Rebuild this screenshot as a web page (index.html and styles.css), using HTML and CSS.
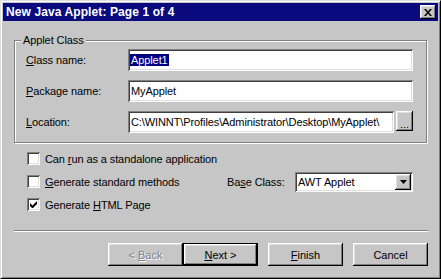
FILE: index.html
```html
<!DOCTYPE html>
<html lang="en">
<head>
  <meta charset="UTF-8">
  <title>New Java Applet</title>
  <link rel="stylesheet" href="styles.css">
</head>
<body>
  <div class="window">
    <div class="titlebar">
      <span class="title">New Java Applet: Page 1 of 4</span>
      <span class="close">
        <svg width="8" height="7" viewBox="0 0 8 7"><path d="M0 0h2l2 2.5L6 0h2L5 3.5 8 7H6L4 4.5 2 7H0l3-3.5z" fill="#000"/></svg>
      </span>
    </div>

    <div class="content">
      <fieldset class="group">
        <legend>Applet Class</legend>
        <div class="field">
          <label><u>C</u>lass name:</label>
          <div class="edit"><span class="sel">Applet1</span></div>
        </div>
        <div class="field">
          <label><u>P</u>ackage name:</label>
          <div class="edit">MyApplet</div>
        </div>
        <div class="field">
          <label><u>L</u>ocation:</label>
          <div class="edit">C:\WINNT\Profiles\Administrator\Desktop\MyApplet\</div>
          <button class="browse">...</button>
        </div>
      </fieldset>

      <div class="options">
        <div class="row">
          <span class="check"></span>
          <span>Can <u>r</u>un as a standalone application</span>
        </div>
        <div class="row">
          <span class="check"></span>
          <span><u>G</u>enerate standard methods</span>
          <div class="base">
            <span class="base-label">Ba<u>s</u>e Class:</span>
            <div class="combo">
              <span>AWT Applet</span>
              <span class="drop">
                <svg width="7" height="4" viewBox="0 0 7 4"><path d="M0 0h7L3.5 4z" fill="#000"/></svg>
              </span>
            </div>
          </div>
        </div>
        <div class="row">
          <span class="check">
            <svg width="7" height="7" viewBox="0 0 7 7"><path d="M0 2v3l2 2h1l4-4V0L2.5 4.5z" fill="#000"/></svg>
          </span>
          <span>Generate <u>H</u>TML Page</span>
        </div>
      </div>

      <div class="separator"></div>

      <div class="buttons">
        <div class="pair">
          <button class="btn disabled">&lt; <u>B</u>ack</button>
          <button class="btn default"><u>N</u>ext &gt;</button>
        </div>
        <button class="btn"><u>F</u>inish</button>
        <button class="btn">Cancel</button>
      </div>
    </div>
  </div>
</body>
</html>
```

FILE: styles.css
```css
* {
  box-sizing: border-box;
}

body {
  margin: 0;
  font-family: "Liberation Sans", Arial, sans-serif;
  font-size: 11px;
  letter-spacing: -0.1px;
  color: #000;
}

.window {
  width: 441px;
  height: 279px;
  padding: 2px;
  background: #c6c6c6;
  border: 1px solid;
  border-color: #dfdfdf #000 #000 #dfdfdf;
  box-shadow: inset 1px 1px #fff, inset -1px -1px #808080;
}

.titlebar {
  height: 18px;
  padding: 0 2px 0 3px;
  display: flex;
  align-items: center;
  justify-content: space-between;
  background: #0a0a7e;
  color: #fff;
  font-size: 12px;
  font-weight: bold;
  letter-spacing: 0.1px;
}

.close {
  width: 16px;
  height: 14px;
  display: flex;
  align-items: center;
  justify-content: center;
  background: #c6c6c6;
  box-shadow: inset -1px -1px #000, inset 1px 1px #fff, inset -2px -2px #808080, inset 2px 2px #dfdfdf;
}

.content {
  padding: 0 11px;
}

/* etched group box */
.group {
  margin: 13px 0 0;
  padding: 2px 13px 9px 11px;
  min-inline-size: 0;
  border: 1px solid #808080;
  box-shadow: inset 1px 1px #fff, 1px 1px #fff;
}

.group legend {
  margin-left: -5px;
  padding: 0 2px;
  line-height: 13px;
  background: #c6c6c6;
}

.field {
  display: flex;
  align-items: center;
  height: 22px;
}

.field + .field {
  margin-top: 9px;
}

.field label {
  width: 102px;
  flex-shrink: 0;
}

.edit {
  flex: 1;
  height: 22px;
  padding: 0 3px;
  display: flex;
  align-items: center;
  overflow: hidden;
  white-space: nowrap;
  background: #fff;
  box-shadow: inset 1px 1px #808080, inset -1px -1px #fff, inset 2px 2px #404040, inset -2px -2px #dfdfdf;
}

.sel {
  margin-left: -1px;
  padding: 0 1px;
  line-height: 12px;
  background: #000080;
  color: #fff;
}

.browse {
  align-self: flex-start;
  width: 17px;
  height: 20px;
  margin-left: 2px;
  padding: 5px 0 0;
  border: 0;
  font: inherit;
  background: #c6c6c6;
  box-shadow: inset -1px -1px #000, inset 1px 1px #fff, inset -2px -2px #808080, inset 2px 2px #dfdfdf;
}

.options {
  margin-top: 4px;
  padding: 0 14px 0 13px;
}

.row {
  display: flex;
  align-items: center;
  height: 23px;
}

.check {
  width: 13px;
  height: 13px;
  margin-right: 5px;
  flex-shrink: 0;
  display: flex;
  align-items: center;
  justify-content: center;
  background: #fff;
  box-shadow: inset 1px 1px #808080, inset -1px -1px #fff, inset 2px 2px #404040, inset -2px -2px #dfdfdf;
}

.base {
  margin-left: auto;
  display: flex;
  align-items: center;
}

.base-label {
  width: 68px;
}

.combo {
  width: 118px;
  height: 20px;
  padding: 0 2px 0 3px;
  display: flex;
  align-items: center;
  justify-content: space-between;
  background: #fff;
  box-shadow: inset 1px 1px #808080, inset -1px -1px #fff, inset 2px 2px #404040, inset -2px -2px #dfdfdf;
}

.drop {
  width: 16px;
  height: 16px;
  display: flex;
  align-items: center;
  justify-content: center;
  background: #c6c6c6;
  box-shadow: inset -1px -1px #000, inset 1px 1px #fff, inset -2px -2px #808080, inset 2px 2px #dfdfdf;
}

.separator {
  margin: 14px -1px 0 0;
  border-top: 1px solid #808080;
  border-bottom: 1px solid #fff;
}

.buttons {
  margin: 11px -1px 0 0;
  display: flex;
  justify-content: flex-end;
  gap: 10px;
}

.pair {
  display: flex;
}

.btn {
  width: 75px;
  height: 23px;
  padding: 0;
  border: 0;
  font: inherit;
  color: #000;
  background: #c6c6c6;
  box-shadow: inset -1px -1px #000, inset 1px 1px #fff, inset -2px -2px #808080, inset 2px 2px #dfdfdf;
}

.btn.default {
  border: 1px solid #000;
}

.btn.disabled {
  color: #808080;
  text-shadow: 1px 1px #fff;
}
```
